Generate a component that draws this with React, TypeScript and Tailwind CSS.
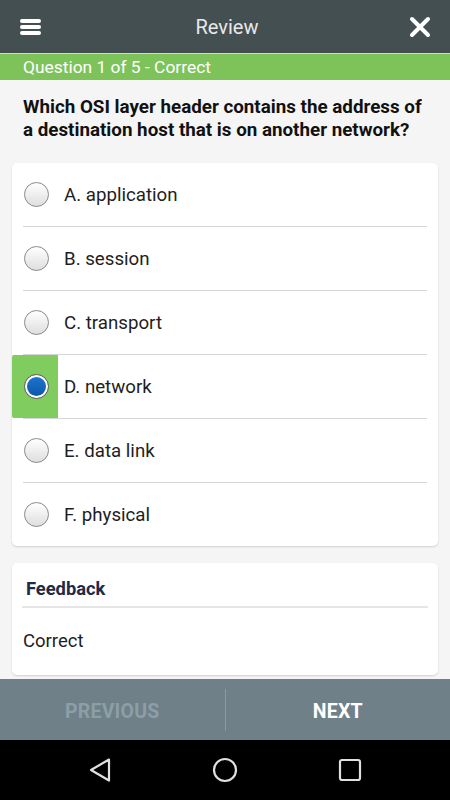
import React from 'react';

const options = [
  { label: 'A. application', selected: false },
  { label: 'B. session', selected: false },
  { label: 'C. transport', selected: false },
  { label: 'D. network', selected: true },
  { label: 'E. data link', selected: false },
  { label: 'F. physical', selected: false },
];

const Radio = ({ checked }: { checked: boolean }) =>
  checked ? (
    <div className="w-[25px] h-[25px] rounded-full bg-white border border-[#555] flex items-center justify-center">
      <div className="w-[19px] h-[19px] rounded-full bg-gradient-to-b from-[#1c74d0] to-[#0f57a8]" />
    </div>
  ) : (
    <div className="w-[25px] h-[25px] rounded-full border border-[#8a8a8a] bg-gradient-to-b from-[#ffffff] to-[#dedede]" />
  );

const App = () => {
  return (
    <div className="h-[800px] w-[450px] flex flex-col bg-[#f5f5f5] font-['Roboto',sans-serif] overflow-hidden">
      {/* header */}
      <div className="h-[54px] bg-[#444f52] border-b border-[#c9dcd8] flex items-center justify-between px-[20px] shrink-0">
        <div className="flex flex-col gap-[2px] w-[21px]">
          <div className="h-[4px] rounded-full bg-white" />
          <div className="h-[4px] rounded-full bg-white" />
          <div className="h-[4px] rounded-full bg-white" />
        </div>
        <span className="text-[20px] text-[#e8e8e8] ml-[4px] mt-[1px]">Review</span>
        <svg width="22" height="22" viewBox="0 0 22 22" className="mr-[-1px]">
          <path d="M3 3 L19 19 M19 3 L3 19" stroke="white" strokeWidth="4" strokeLinecap="round" />
        </svg>
      </div>

      <div className="h-[26px] bg-[#7dc35a] flex items-center px-[23px] shrink-0">
        <span className="text-[17.4px] text-white">Question 1 of 5 - Correct</span>
      </div>

      <div className="flex-grow flex flex-col px-[12px]">
        <p className="pt-[16px] pl-[11px] pr-[8px] text-[18.8px] leading-[23px] font-bold text-[#111]">
          Which OSI layer header contains the address of a destination host that is on another network?
        </p>

        <div className="mt-[21px] bg-white rounded-[5px] shadow-[0_1px_2px_rgba(0,0,0,0.15)]">
          {options.map((opt, i) => (
            <div key={i}>
              {i > 0 && <div className="mx-[11px] h-px bg-[#d6d6d6]" />}
              <div className="h-[63px] flex items-center">
                <div
                  className={`w-[46px] h-full flex items-center pl-[12px] ${opt.selected ? 'bg-[#80cc5e] rounded-l-[2px]' : ''}`}
                >
                  <Radio checked={opt.selected} />
                </div>
                <span className="pl-[6px] pt-[2px] text-[18.7px] text-[#1e1e1e]">{opt.label}</span>
              </div>
            </div>
          ))}
        </div>

        <div className="mt-[17px] bg-white rounded-[5px] shadow-[0_1px_2px_rgba(0,0,0,0.15)] px-[10px] pt-[16px] pb-[24px]">
          <h3 className="pl-[4px] text-[18.3px] leading-[20px] font-bold text-[#1f2b47]">Feedback</h3>
          <div className="mt-[7px] h-[2px] bg-[#e6e6e6]" />
          <p className="pt-[23px] pl-[1px] text-[18.5px] leading-[20px] text-[#1e1e1e]">Correct</p>
        </div>
      </div>

      {/* bottom nav */}
      <div className="h-[61px] bg-[#6f8089] flex items-center shrink-0">
        <button className="flex-1 pt-[4px] text-[19.5px] font-bold text-[#8d9ea6] tracking-[0.2px]">PREVIOUS</button>
        <div className="w-px h-[42px] bg-[#8a9ba3]" />
        <button className="flex-1 pt-[4px] text-[19.5px] font-bold text-white tracking-[0.2px]">NEXT</button>
      </div>

      <div className="h-[60px] bg-black flex items-center justify-center shrink-0">
        <div className="w-[125px] flex justify-center">
          <svg width="24" height="26" viewBox="0 0 24 26">
            <path d="M21 2.5 L3 13 L21 23.5 Z" fill="none" stroke="#e0e0e0" strokeWidth="2.2" strokeLinejoin="round" />
          </svg>
        </div>
        <div className="w-[125px] flex justify-center">
          <svg width="26" height="26" viewBox="0 0 26 26">
            <circle cx="13" cy="13" r="11" fill="none" stroke="#e0e0e0" strokeWidth="2.2" />
          </svg>
        </div>
        <div className="w-[125px] flex justify-center">
          <svg width="24" height="24" viewBox="0 0 24 24">
            <rect x="2" y="2" width="20" height="20" rx="2" fill="none" stroke="#e0e0e0" strokeWidth="2.2" />
          </svg>
        </div>
      </div>
    </div>
  );
};

export default App;
